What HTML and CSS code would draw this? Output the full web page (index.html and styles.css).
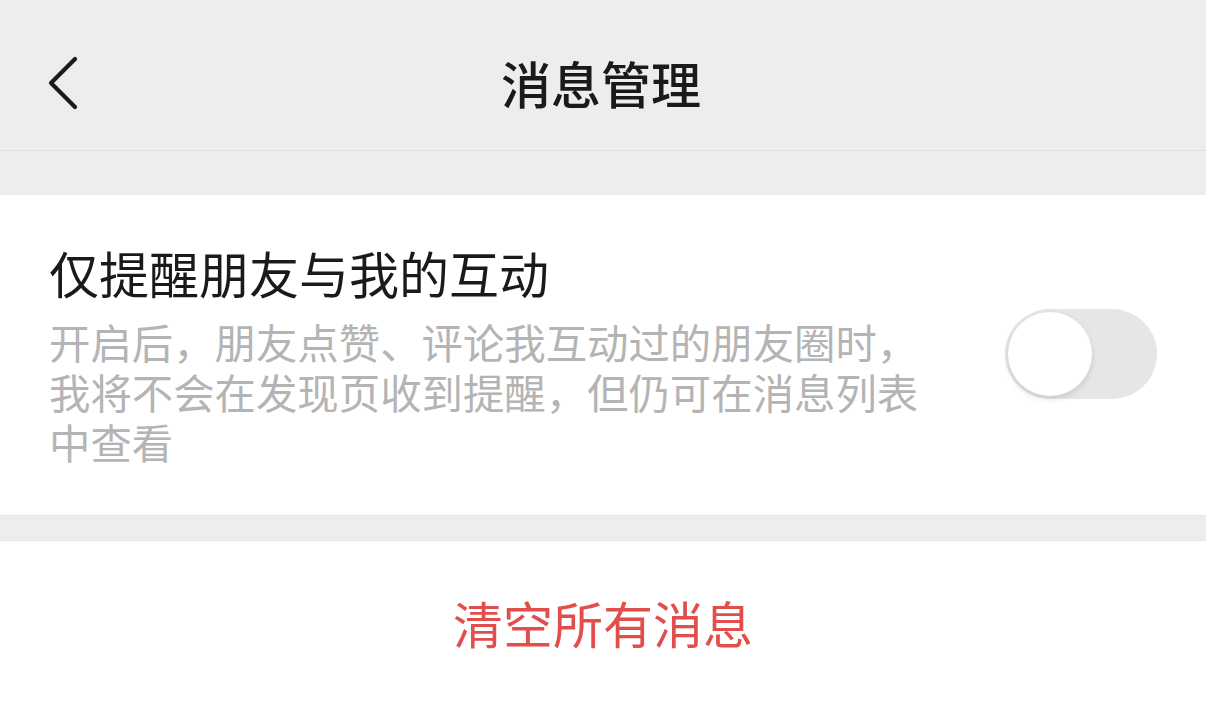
FILE: index.html
```html
<!DOCTYPE html>
<html lang="zh-CN">
<head>
<meta charset="utf-8">
<link rel="stylesheet" href="styles.css">
</head>
<body>
<div class="page">
  <header class="navbar">
    <button class="back" aria-label="返回">
      <svg width="34" height="54" viewBox="0 0 34 54"><polyline points="29,3 5,27 29,51" fill="none" stroke="#1a1a1a" stroke-width="4.2" stroke-linecap="round" stroke-linejoin="round"/></svg>
    </button>
    <h1 class="title">消息管理</h1>
  </header>
  <div class="spacer"></div>
  <section class="cell">
    <div class="cell-text">
      <div class="cell-title">仅提醒朋友与我的互动</div>
      <div class="cell-desc">开启后，朋友点赞、评论我互动过的朋友圈时，我将不会在发现页收到提醒，但仍可在消息列表中查看</div>
    </div>
    <div class="switch"><div class="knob"></div></div>
  </section>
  <div class="gap"></div>
  <section class="action">
    <span class="danger">清空所有消息</span>
  </section>
</div>
</body>
</html>
```
FILE: styles.css
```css
* { box-sizing: border-box; }
html, body { margin: 0; padding: 0; }
body {
  background: #ffffff;
  font-family: "Noto Sans CJK SC", "Noto Sans", sans-serif;
  color: #1a1a1a;
}
.page { width: 1206px; height: 702px; overflow: hidden; }
.navbar {
  height: 151px;
  background: #ededed;
  border-bottom: 1px solid #dedede;
  display: flex;
  align-items: center;
  justify-content: center;
  position: relative;
}
.back {
  position: absolute;
  left: 46px;
  top: 56px;
  padding: 0;
  border: 0;
  background: none;
  display: flex;
}
.title {
  margin: 0;
  font-size: 50px;
  font-weight: 500;
  line-height: 60px;
  margin-top: 14px;
  margin-right: 4px;
  color: #1a1a1a;
}
.spacer { height: 44px; background: #ededed; }
.cell {
  display: flex;
  align-items: center;
  justify-content: space-between;
  padding: 46px 49px 48px 49px;
  background: #fff;
  height: 320px;
}
.cell-text { display: flex; flex-direction: column; gap: 14px; }
.cell-title {
  font-size: 50px;
  line-height: 60px;
  color: #1a1a1a;
}
.cell-desc {
  width: 880px;
  font-size: 41.4px;
  line-height: 50px;
  color: #b4b4b4;
}
.switch {
  width: 152px;
  height: 90px;
  border-radius: 45px;
  background: #e6e6e6;
  padding: 3px;
  display: flex;
  align-items: center;
}
.knob {
  width: 84px;
  height: 84px;
  border-radius: 50%;
  background: #fff;
  box-shadow: 0 3px 6px rgba(0,0,0,0.12);
}
.gap {
  height: 26px;
  background: #ededed;
  border-top: 1px solid #e6e6e6;
  border-bottom: 1px solid #e6e6e6;
}
.action {
  height: 162px;
  display: flex;
  align-items: center;
  justify-content: center;
  background: #fff;
}
.danger {
  font-size: 50px;
  line-height: 60px;
  color: #e14e4b;
}
```
